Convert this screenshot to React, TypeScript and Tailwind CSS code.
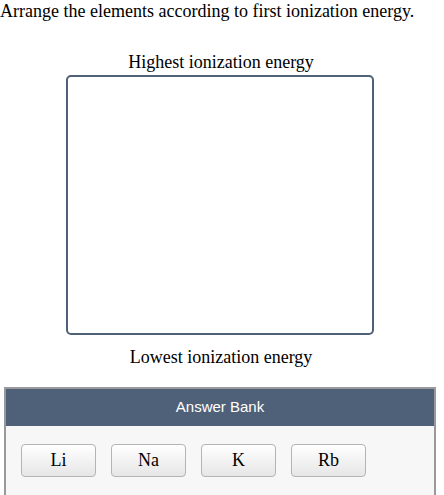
import React from 'react';

const elements = ['Li', 'Na', 'K', 'Rb'];

const serif = "font-['Liberation_Serif','Times_New_Roman',serif]";

const App: React.FC = () => {
  return (
    <div className={`w-[444px] h-[495px] bg-white text-black overflow-hidden ${serif}`}>
      <p className="text-[18px] leading-[22px] pt-0">
        Arrange the elements according to first ionization energy.
      </p>

      {/* Ranking target */}
      <div className="flex flex-col items-center w-[440px] mt-[29px]">
        <div className="text-[18px] leading-[22px] pl-[2px]">Highest ionization energy</div>
        <div className="ml-[-1px] mt-[2px] w-[308px] h-[260px] border-2 border-[#4f6079] rounded-[5px] bg-white" />
        <div className="text-[18px] leading-[22px] mt-[11px] pl-[2px]">Lowest ionization energy</div>
      </div>

      {/* Answer bank */}
      <div className="ml-[4px] mt-[19px] w-[432px] h-[120px] border-2 border-b-0 border-[#999999] bg-[#f7f7f7]">
        <div className="h-[37px] bg-[#4f6079] flex items-center justify-center text-white text-[15px] font-['Liberation_Sans',Arial,sans-serif]">
          Answer Bank
        </div>
        <div className="flex gap-[15px] pl-[15px] pt-[18px]">
          {elements.map((el) => (
            <button
              key={el}
              className={`w-[75px] h-[33px] rounded-[4px] border border-[#b4b4b4] bg-gradient-to-b from-white to-[#e6e6e6] text-[18px] text-black ${serif}`}
            >
              {el}
            </button>
          ))}
        </div>
      </div>
    </div>
  );
};

export default App;
